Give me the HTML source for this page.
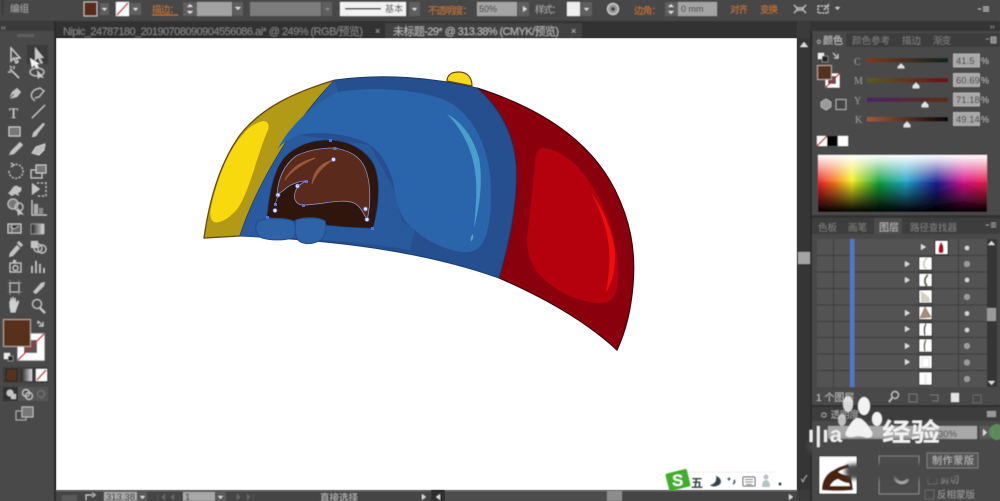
<!DOCTYPE html>
<html><head><meta charset="utf-8"><style>
html,body{margin:0;padding:0;background:#474747;width:1000px;height:501px;overflow:hidden}
svg{display:block}
text{font-family:"Liberation Sans","Noto Sans CJK SC",sans-serif}
.o{fill:#c4762c;font-size:9.5px}
.g{fill:#a8a8a8;font-size:9.5px}
.d{fill:#7d7d7d;font-size:9.5px}
.i{fill:none;stroke:#c4c4c4;stroke-width:1.2}
.f{fill:#c4c4c4}
.k{fill:#d0d0d0}
</style></head><body>
<svg width="1000" height="501" viewBox="0 0 1000 501" xmlns="http://www.w3.org/2000/svg">
<defs>
<filter id="b" x="-2%" y="-2%" width="104%" height="104%"><feGaussianBlur stdDeviation="0.45"/></filter>
<filter id="b2" x="-20%" y="-20%" width="140%" height="140%"><feGaussianBlur stdDeviation="2"/></filter>
<filter id="b3" x="-20%" y="-20%" width="140%" height="140%"><feGaussianBlur stdDeviation="0.3"/></filter>
<linearGradient id="hue" x1="0" x2="1" y1="0" y2="0">
<stop offset="0" stop-color="#ee1c25"/><stop offset=".1" stop-color="#f47a20"/><stop offset=".2" stop-color="#f5ee1e"/><stop offset=".36" stop-color="#12a33a"/><stop offset=".52" stop-color="#22a6cc"/><stop offset=".7" stop-color="#1c1c90"/><stop offset=".86" stop-color="#d8128c"/><stop offset="1" stop-color="#ee1c4a"/>
</linearGradient>
<linearGradient id="wh" x1="0" x2="0" y1="0" y2="1"><stop offset="0" stop-color="#fff"/><stop offset=".5" stop-color="#fff" stop-opacity="0"/></linearGradient>
<linearGradient id="bl" x1="0" x2="0" y1="0" y2="1"><stop offset=".45" stop-color="#000" stop-opacity="0"/><stop offset="1" stop-color="#000"/></linearGradient>
<linearGradient id="gr" x1="0" x2="1" y1="0" y2="0"><stop offset="0" stop-color="#222"/><stop offset="1" stop-color="#ddd"/></linearGradient>
</defs>

<!-- Canvas -->
<rect width="1000" height="501" fill="#474747"/>
<rect x="56" y="38" width="741" height="452" fill="#fff"/>

<g filter="url(#b3)">
<!-- yellow button -->
<path d="M447 80C448 74 452 72 459 72C467 72 472 77 472 86L447 81Z" fill="#f7d91a" stroke="#6b4a10" stroke-width="1.2"/>
<!-- yellow panel -->
<path d="M204 238C210 195 222 160 240 135C262 107 295 92 335 80C290 125 253 195 240 236Z" fill="#b39a18" stroke="#6b4a10" stroke-width="1.3"/>
<path d="M263 121C267 121 270 124 268 130C258 152 250 190 238 208C230 218 220 224 214 222C209 219 210 210 212 203C218 178 228 150 245 132C250 126 258 122 263 121Z" fill="#f7d90f"/>
<!-- red -->
<path d="M477 88C540 108 590 140 615 190C630 220 636 250 633 285C631 310 625 333 617 350C590 325 550 300 499 278C510 240 518 200 516 165C514 135 500 108 477 88Z" fill="#8a0611" stroke="#3f0508" stroke-width="1.2"/>
<path d="M543 148C565 150 585 170 600 200C612 225 619 250 618 280C617 298 610 304 598 303C580 302 555 292 540 275C530 265 527 252 527 240C529 215 533 190 535 162C536 152 538 148 543 148Z" fill="#b5060f"/>
<path d="M591 193C603 208 612 230 615 252C616 270 611 285 606 292C609 275 611 258 608 240C605 222 598 205 591 193Z" fill="#f0100f"/>
<!-- blue base -->
<path d="M335 80C385 73 435 78 477 88C500 108 514 135 516 165C518 200 510 240 499 278C420 250 330 240 240 236C253 195 290 125 335 80Z" fill="#25508f" stroke="#1b3b6e" stroke-width="1"/>
<path d="M240 236C253 195 290 125 335 80L338 92L300 135L370 145L395 192L402 222L415 229L410 250C350 240 300 238 240 236Z" fill="#2a5a9e"/>
<!-- blue lighter -->
<path d="M338 92C375 86 420 90 445 100C470 112 486 140 490 175C492 200 491 222 485 238C480 250 472 253 462 252C445 250 425 240 415 230C402 222 397 205 395 192C392 172 384 155 370 145C355 135 320 130 300 135C290 138 282 143 277 150C290 125 312 105 338 92Z" fill="#2b65ab"/>
<path d="M447 114C462 122 473 137 479 158C483 180 480 205 474 228C476 205 478 185 474 165C470 145 460 127 447 114Z" fill="#4a9ecb"/>
<path d="M473 234C474 237 472 241 471 241C470 239 471 236 473 234Z" fill="#5aa4cf"/>
<!-- window -->
<path d="M267 217C269 195 273 172 284 158C296 145 313 140 330 140C350 141 366 150 374 165C381 182 379 205 373 228C340 228 300 222 267 217Z" fill="#2d1410" stroke="#1b3b6e" stroke-width=".8"/>
<path d="M277 195C278 178 284 165 296 156C308 150 320 148 334 148C348 150 360 156 365 168C371 182 371 205 367 220C363 212 360 206 354 203C342 198 320 205 303 205C296 205 293 198 295 193C296 188 300 184 306 181C298 181 289 185 284 190Z" fill="#5a2c1b" stroke="#8890c0" stroke-width=".8"/>
<path d="M315 158C300 162 290 170 285 180C290 172 300 165 315 158Z" fill="#99583a" stroke="#99583a" stroke-width="1.2"/>
<path d="M333 160C320 163 313 172 312 184C316 174 322 167 333 160Z" fill="#99583a" stroke="#99583a" stroke-width=".8"/>
<!-- buttons -->
<path d="M257 222C265 217 285 218 293 221C297 227 297 234 293 238C280 241 266 240 260 237C255 233 255 227 257 222Z" fill="#2d63a8" stroke="#24508f" stroke-width="1.2"/>
<path d="M296 220C305 217 318 217 325 221C327 230 325 238 319 241C310 245 302 244 298 240C294 233 295 226 296 220Z" fill="#2d63a8" stroke="#24508f" stroke-width="1.2"/>
<!-- anchors -->
<g fill="#5a6fd0">
<rect x="329" y="139" width="3" height="3"/><rect x="333.500" y="147" width="3" height="3"/><rect x="266" y="216" width="3" height="3"/><rect x="371" y="227" width="3" height="3"/><rect x="305" y="180" width="3" height="3"/><rect x="302" y="204" width="3" height="3"/><rect x="274" y="203" width="3" height="3"/>
</g>
<g fill="#e4e6f6" stroke="#5a6fd0" stroke-width=".8">
<circle cx="333.500" cy="159.500" r="2"/><circle cx="297.500" cy="186" r="2"/><circle cx="278" cy="195" r="2"/><circle cx="275" cy="210.500" r="2"/><circle cx="365.500" cy="209" r="2"/><circle cx="367" cy="219.500" r="2"/>
</g>
<path d="M306 181L297 186M278 195L275 205" stroke="#7c8ad8" stroke-width=".6"/>
</g>

<g filter="url(#b)">
<!-- top bar -->
<rect width="1000" height="22" fill="#474747"/>
<rect y="21" width="1000" height="1" fill="#333"/>
<rect x="2" y="0" width="1" height="15" fill="#333"/>
<text x="10" y="12" class="g">编组</text>
<rect x="84" y="2" width="13" height="14" fill="#5a2c17" stroke="#bbb"/>
<rect x="100" y="3" width="9" height="12" fill="#5e5e5e"/><path d="M102 8h5l-2.500 3z" fill="#ddd"/>
<rect x="116" y="2" width="13" height="14" fill="#fff"/><path d="M117 15L128 3" stroke="#c8202a" stroke-width="1.500"/>
<rect x="130" y="3" width="11" height="12" fill="#5e5e5e"/><path d="M133 8h5l-2.500 3z" fill="#ddd"/>
<text x="152" y="13" class="o" textLength="27">描边：</text><rect x="152" y="14.500" width="26" height="1" fill="#c4762c"/>
<rect x="183" y="2" width="14" height="14" fill="#5e5e5e"/><path d="M187 7h6l-3-3zM187 11h6l-3 3z" fill="#ddd"/>
<rect x="197" y="2" width="35" height="14" fill="#a2a2a2"/>
<rect x="233" y="2" width="10" height="14" fill="#5e5e5e"/><path d="M235 7h6l-3 3z" fill="#ddd"/>
<rect x="250" y="2" width="71" height="14" fill="#7b7b7b"/>
<rect x="322" y="2" width="10" height="14" fill="#5e5e5e"/><path d="M325 8h5l-2.500 3z" fill="#888"/>
<rect x="340" y="2" width="66" height="14" fill="#f2f2f2"/><rect x="345" y="8" width="36" height="1.500" fill="#111"/>
<text x="385" y="12" font-size="9" fill="#444" textLength="18">基本</text>
<rect x="409" y="2" width="11" height="14" fill="#5e5e5e"/><path d="M412 8h5l-2.500 3z" fill="#ddd"/>
<text x="428" y="14" class="o" textLength="44">不透明度：</text>
<rect x="477" y="2" width="40" height="14" fill="#a4a4a4"/><text x="479" y="12" font-size="9" fill="#333">50%</text>
<rect x="518" y="2" width="11" height="14" fill="#5e5e5e"/><path d="M523 6v6l4-3z" fill="#ddd"/>
<text x="535" y="13" class="g" textLength="26">样式：</text>
<rect x="567" y="2" width="13" height="14" fill="#eee"/>
<rect x="581" y="2" width="11" height="14" fill="#5e5e5e"/><path d="M584 8h5l-2.500 3z" fill="#ddd"/>
<circle cx="613" cy="9" r="5.500" fill="#999" stroke="#ddd"/><circle cx="613" cy="9" r="2" fill="#444"/>
<text x="634" y="14" class="o" textLength="27">边角：</text>
<rect x="665" y="2" width="13" height="14" fill="#5e5e5e"/><path d="M668 7h6l-3-3zM668 11h6l-3 3z" fill="#ddd"/>
<rect x="678" y="2" width="39" height="14" fill="#a4a4a4"/><text x="681" y="12" font-size="9" fill="#333">0 mm</text>
<text x="730" y="13" class="o" textLength="18">对齐</text>
<text x="760" y="13" class="o" textLength="18">变换</text>
<path d="M794 5l3 3h6l3-3M794 13l3-3h6l3 3M797 8v2M803 8v2" class="i"/>
<rect x="818" y="6" width="10" height="7" class="i" stroke-dasharray="2 1"/><path d="M824 10l5-6" class="i"/>
<path d="M835 7h5l-2.500 3z" fill="#ccc"/>
<path d="M978 9h3M983 7h6M983 9h6M983 11h6" stroke="#bbb" stroke-width="1"/>

<!-- tab bar -->
<rect y="22" width="797" height="16" fill="#333"/>
<rect x="56" y="23" width="329" height="15" fill="#303030"/>
<text x="63" y="35" font-size="11" fill="#858585" textLength="300">Nipic_24787180_20190708090904556086.ai* @ 249% (RGB/预览)</text>
<text x="375" y="34" font-size="9" fill="#aaa">×</text>
<rect x="385" y="23" width="197" height="15" fill="#434343"/>
<text x="393" y="35" font-size="11" fill="#b8b8b8" textLength="166">未标题-29* @ 313.38% (CMYK/预览)</text>
<text x="571" y="34" font-size="9" fill="#bbb">×</text>
<rect x="582" y="23" width="215" height="15" fill="#333"/>

<!-- left toolbar -->
<rect y="22" width="54" height="479" fill="#484848"/>
<rect y="22" width="54" height="9" fill="#3b3b3b"/>
<text x="1" y="30" font-size="7" fill="#aaa">‹‹</text>
<rect x="17" y="34" width="17" height="3" fill="#5e5e5e"/>
<rect x="54" y="22" width="2" height="479" fill="#2a2a2a"/>
<rect x="27" y="45" width="21" height="19" fill="#3a3a3a"/>
<!-- selection -->
<path d="M11 48v13l3-3 2 5 2-1-2-4h4z" fill="none" stroke="#d5d5d5" stroke-width="1.200"/>
<path d="M35 47v14l3-3 3 6 2-1-3-5h4z" fill="#c8c8c8"/>
<path d="M30 58l2 10 2-3 3 4 2-1-2-4h3z" fill="#f4f4f4"/>
<path d="M10 69l9 9" stroke="#ccc" stroke-width="1.500"/><path d="M10 66l2 2M14 66v3M8 72h3" class="i"/>
<ellipse cx="37" cy="72" rx="7" ry="4" class="i"/><path d="M37 70l1 9 2-2 4 1z" fill="#ccc"/>
<!-- pen -->
<path d="M9 99l3-7 5-4 4 4-4 5z" class="f"/><path d="M9 99l5-5" stroke="#444"/>
<path d="M32 98c-2-4 1-8 5-9l3-1 4 3-5 6-4 1M32 98l3 3" class="i"/>
<text x="9" y="118" font-size="15" fill="#d2d2d2" style="font-family:'Liberation Serif',serif">T</text>
<path d="M32 118l13-13" stroke="#ccc" stroke-width="1.200"/>
<rect x="9" y="127" width="11" height="9" fill="#777" stroke="#ccc"/>
<path d="M32 137c3 0 5-1 6-4l7-9-2-1-8 8c-2 1-2 3-3 6z" class="f"/>
<path d="M9 155l2-4 9-9 3 3-9 9z" class="f"/>
<path d="M32 153l4-6 9-3-1 6-5 5z" fill="#bbb" stroke="#eee" stroke-width=".6"/>
<!-- rotate -->
<path d="M9 171a7 7 0 1 0 4-6" class="i" stroke-dasharray="2 1.500"/><path d="M11 163l3 2-3 2" class="i"/>
<rect x="31" y="170" width="11" height="8" class="i"/><rect x="36" y="165" width="10" height="8" fill="#777" stroke="#ccc"/>
<path d="M8 193c3-1 4-6 7-7s3 2 6 1c1 3 0 5-3 6l1 3-4-2-3 2z" class="f"/>
<path d="M32 183l8 6-8 6z" class="f"/><path d="M37 183h9v13h-9" class="i" stroke-dasharray="2 2"/>
<!-- shape builder -->
<circle cx="13" cy="204" r="5" fill="#777" stroke="#ccc"/><circle cx="19" cy="207" r="4" class="i"/><path d="M17 207l1 9 2-2 4 1z" class="f"/>
<path d="M32 200v15h15" class="i"/><rect x="34" y="204" width="4" height="10" fill="#aaa"/><rect x="39" y="208" width="4" height="6" fill="#888"/>
<rect x="8" y="224" width="13" height="9" fill="#666" stroke="#ccc"/><path d="M10 226l4 3 5-3M12 224v9" stroke="#ddd" stroke-width=".6"/>
<rect x="31" y="224" width="13" height="10" fill="url(#gr)" stroke="#bbb" stroke-width=".6"/>
<path d="M10 253l7-8 3 3-7 8-4 1zM17 243l2-2 4 4-2 2z" class="f"/>
<rect x="31" y="241" width="7" height="7" class="f"/><circle cx="38" cy="248" r="4" class="i"/><circle cx="42" cy="249" r="4" class="i"/>
<!-- graph -->
<rect x="10" y="263" width="11" height="9" class="i"/><circle cx="15.500" cy="268" r="2.500" class="i"/><rect x="13" y="260" width="3" height="3" class="f"/>
<path d="M32 273v-7M36 273v-12M40 273v-9M44 273v-5" stroke="#ccc" stroke-width="1.500"/>
<rect x="10" y="283" width="9" height="9" class="i"/><path d="M8 283h14M8 292h14M10 280v15M19 280v15" stroke="#aaa" stroke-width=".5"/>
<path d="M33 292l8-9 4-1-1 4-8 8z" class="f"/>
<path d="M10 306v-5l1 3v-6l2 5v-6l1 6 1-5 1 6 2-3c1 0 0 3-1 5l-2 6h-4z" fill="#d0d0d0" stroke="#d0d0d0"/>
<circle cx="37" cy="304" r="4.500" class="i" stroke-width="1.800"/><path d="M40 308l5 5" stroke="#ccc" stroke-width="2"/>
<!-- fill stroke -->
<rect x="17.500" y="333.500" width="27" height="27" fill="#fff" stroke="#aaa" stroke-width=".5"/>
<rect x="24" y="340" width="13" height="13" fill="#565656"/>
<path d="M18 360L44 334" stroke="#c01d2b" stroke-width="1.500"/>
<rect x="3.500" y="319.500" width="27" height="27" fill="#57301f" stroke="#b5a59a"/>
<path d="M38 321l5 5M43 322v4h-4M38 321v3" class="i" stroke-width="1"/>
<rect x="4" y="353" width="6" height="6" fill="#eee"/><rect x="8" y="356" width="5" height="5" fill="#222" stroke="#ccc" stroke-width=".5"/>
<rect x="3" y="367" width="45" height="16" fill="#3c3c3c"/>
<rect x="6" y="369" width="11" height="12" fill="#57301f" stroke="#222"/>
<rect x="21" y="369" width="11" height="12" fill="url(#gr)"/>
<rect x="36" y="369" width="11" height="12" fill="#fff"/><path d="M37 380L46 370" stroke="#c01d2b" stroke-width="1.500"/>
<rect x="3" y="387" width="15" height="14" fill="#333"/><rect x="18" y="387" width="30" height="14" fill="#555"/>
<circle cx="10" cy="393" r="3.500" class="f"/><rect x="11" y="394" width="5" height="5" class="f"/>
<circle cx="26" cy="393" r="3.500" class="i"/><circle cx="29" cy="396" r="3.500" class="i"/>
<circle cx="41" cy="394" r="3.500" fill="none" stroke="#777"/>
<rect x="16" y="411" width="10" height="9" fill="none" stroke="#aaa"/><rect x="22" y="407" width="11" height="10" fill="#777" stroke="#bbb"/>

<!-- gutter between canvas and panels -->
<rect x="797" y="22" width="15" height="479" fill="#3a3a3a"/>
<rect x="797" y="38" width="13" height="452" fill="#363636"/>
<path d="M800 47h8l-4-5z" fill="#ddd"/>
<rect x="798" y="252" width="12" height="12" fill="#a4a4a4"/>
<rect x="810" y="30" width="2" height="471" fill="#2b2b2b"/>

<!-- right panels -->
<rect x="812" y="22" width="188" height="479" fill="#494949"/>
<rect x="810" y="22" width="190" height="9" fill="#343434"/>
<text x="990" y="29" font-size="7" fill="#aaa">››</text>
<rect x="812" y="33" width="188" height="14" fill="#3e3e3e"/>
<rect x="813" y="33" width="33" height="14" fill="#494949"/>
<text x="816" y="44" font-size="7" fill="#ccc">≎</text>
<text x="823" y="44" font-size="10" fill="#c6c6c6" textLength="20">颜色</text>
<text x="852" y="44" class="d" textLength="38">颜色参考</text>
<text x="902" y="44" class="d" textLength="19">描边</text>
<text x="933" y="44" class="d" textLength="18">渐变</text>
<path d="M986 39h3M991 37h5v6h-5z" stroke="#aaa" fill="#888" stroke-width=".8"/>

<rect x="818" y="53" width="6" height="6" fill="#eee"/><rect x="822" y="56" width="6" height="6" fill="#222" stroke="#bbb" stroke-width=".5"/>
<path d="M833 53l4 4M838 54v4h-4" class="i" stroke-width=".9"/>
<rect x="825.500" y="73.500" width="14" height="14" fill="#fff"/><rect x="828" y="76" width="8" height="8" fill="#555"/><path d="M825 88L840 73" stroke="#c01d2b" stroke-width="1.400"/>
<rect x="817.500" y="65.500" width="14" height="14" fill="#57301f" stroke="#b5a59a"/>
<path d="M821 102l5-3 5 3v5l-5 3-5-3z" fill="#999" stroke="#ccc" stroke-width=".6"/>
<rect x="836" y="99.500" width="10" height="10" fill="#444" stroke="#aaa"/>

<g font-size="10" fill="#999">
<text x="854" y="65" style="font-family:'Liberation Serif',serif">C</text>
<text x="854" y="84" style="font-family:'Liberation Serif',serif">M</text>
<text x="854" y="104" style="font-family:'Liberation Serif',serif">Y</text>
<text x="855" y="123" style="font-family:'Liberation Serif',serif">K</text>
</g>
<defs>
<linearGradient id="sc" x1="0" x2="1"><stop offset="0" stop-color="#7a3a20"/><stop offset="1" stop-color="#10241e"/></linearGradient>
<linearGradient id="sm" x1="0" x2="1"><stop offset="0" stop-color="#5a5a1a"/><stop offset="1" stop-color="#6a1020"/></linearGradient>
<linearGradient id="sy" x1="0" x2="1"><stop offset="0" stop-color="#4a2468"/><stop offset="1" stop-color="#5a3010"/></linearGradient>
<linearGradient id="sk" x1="0" x2="1"><stop offset="0" stop-color="#a05a3a"/><stop offset="1" stop-color="#080404"/></linearGradient>
</defs>
<rect x="867" y="58" width="81" height="4.500" fill="url(#sc)"/>
<rect x="867" y="78" width="81" height="4.500" fill="url(#sm)"/>
<rect x="867" y="97.500" width="81" height="4.500" fill="url(#sy)"/>
<rect x="867" y="117" width="81" height="4.500" fill="url(#sk)"/>
<path d="M901 64l-3 3v1h6v-1z M916 83l-3 3v2h6v-2z M925 102l-3 3v2h6v-2z M907 122l-3 3v2h6v-2z" fill="#e4e4e4" stroke="#e4e4e4" stroke-width=".8"/>
<g fill="#a8a8a8" stroke="#ddd" stroke-width=".5">
<rect x="953.500" y="54" width="26" height="13"/><rect x="953.500" y="73.500" width="26" height="13"/><rect x="953.500" y="93" width="26" height="13"/><rect x="953.500" y="112.500" width="26" height="13"/>
</g>
<g font-size="9.500" fill="#3c3c3c">
<text x="956" y="64">41.5</text><text x="956" y="83.500">60.69</text><text x="956" y="103">71.18</text><text x="956" y="122.500">49.14</text>
</g>
<g font-size="9" fill="#b4b4b4"><text x="981" y="64">%</text><text x="981" y="83.500">%</text><text x="981" y="103">%</text><text x="981" y="122.500">%</text></g>

<rect x="817" y="136" width="10" height="10" fill="#fff"/><path d="M817 146L827 136" stroke="#c01d2b" stroke-width="1.300"/>
<rect x="827" y="136" width="10" height="10" fill="#000"/><rect x="838" y="136" width="10" height="10" fill="#fff"/>
<rect x="818" y="155" width="169" height="57" fill="url(#hue)"/>
<rect x="818" y="155" width="169" height="57" fill="url(#wh)"/>
<rect x="818" y="155" width="169" height="57" fill="url(#bl)"/>

<!-- layers -->
<rect x="812" y="215" width="188" height="3" fill="#333"/>
<rect x="812" y="218" width="188" height="16" fill="#3e3e3e"/>
<rect x="874" y="218" width="28" height="16" fill="#4e4e4e"/>
<text x="818" y="231" class="d" textLength="19">色板</text>
<text x="848" y="231" class="d" textLength="19">画笔</text>
<text x="879" y="231" font-size="10" fill="#bcbcbc" textLength="20">图层</text>
<text x="910" y="231" class="d" textLength="47">路径查找器</text>
<path d="M986 225h3M991 223h5M991 225h5M991 227h5" stroke="#bbb" stroke-width=".8"/>
<rect x="817" y="239" width="170" height="148" fill="#535353"/>
<g fill="#3a3a3a">
<rect x="817" y="255" width="170" height="1"/><rect x="817" y="271.500" width="170" height="1"/><rect x="817" y="288" width="170" height="1"/><rect x="817" y="304.500" width="170" height="1"/><rect x="817" y="321" width="170" height="1"/><rect x="817" y="337" width="170" height="1"/><rect x="817" y="353.500" width="170" height="1"/><rect x="817" y="370" width="170" height="1"/>
<rect x="833" y="239" width="1" height="148"/><rect x="850" y="239" width="1" height="148"/><rect x="958" y="239" width="1" height="148"/>
</g>
<rect x="850" y="239" width="4.500" height="148" fill="#5277c8"/>
<rect x="987" y="239" width="10" height="148" fill="#353535"/>
<rect x="987" y="308" width="9" height="13" fill="#9a9a9a"/>
<path d="M988 245h7l-3.500-4zM988 381h7l-3.500 4z" fill="#ddd"/>
<g fill="#ddd">
<path d="M921 244v6l5-3z"/><path d="M905 261v6l5-3z"/><path d="M905 277v6l5-3z"/><path d="M905 310v6l5-3z"/><path d="M905 326v6l5-3z"/><path d="M905 343v6l5-3z"/><path d="M905 359v6l5-3z"/>
</g>
<rect x="935" y="240.500" width="13" height="14" fill="#fff" stroke="#111"/><path d="M941 242c3 3 3 8 2 11h-4c-1-4 0-8 2-11z" fill="#a80a14"/>
<g fill="#fff" stroke="#111" stroke-width=".8">
<rect x="919" y="257" width="13" height="13"/><rect x="919" y="273.500" width="13" height="13"/><rect x="919" y="290" width="13" height="13"/><rect x="919" y="306.500" width="13" height="13"/><rect x="919" y="323" width="13" height="13"/><rect x="919" y="339" width="13" height="13"/><rect x="919" y="355.500" width="13" height="13"/><rect x="919" y="372" width="13" height="13"/>
</g>
<path d="M927 258c-4 3-4 8-1 11" stroke="#c9c4b8" stroke-width="1.500" fill="none"/>
<path d="M928 275c-4 3-4 8-1 11" stroke="#5a5a38" stroke-width="2" fill="none"/>
<path d="M921 291l8 6 1 5h-9z" fill="#d5cfc4"/>
<path d="M925 307l6 10-11 1z" fill="#ad8b72" stroke="#5a3a2a" stroke-width=".5"/>
<path d="M926 324c-2 3-2 8-1 11" stroke="#3a3a2a" stroke-width="1.500" fill="none"/>
<path d="M926 340c-2 3-2 8-1 11" stroke="#5a5a38" stroke-width="1.500" fill="none"/>
<rect x="922" y="358" width="7" height="9" fill="none" stroke="#ccc" stroke-width=".6"/>
<rect x="924" y="374" width="3" height="10" fill="#eee"/>
<g fill="#9a9a9a" stroke="#333" stroke-width=".5">
<circle cx="967" cy="248" r="3.500" fill="#777"/><circle cx="967" cy="264" r="3.500"/><circle cx="967" cy="280" r="3.500" fill="#777"/><circle cx="967" cy="297" r="3.500"/><circle cx="967" cy="313.500" r="3.500" fill="#777"/><circle cx="967" cy="330" r="3.500" fill="#777"/><circle cx="967" cy="346" r="3.500"/><circle cx="967" cy="362.500" r="3.500"/><circle cx="967" cy="379" r="3.500"/>
</g>
<g fill="#ccc" stroke="#eee" stroke-width=".7"><circle cx="967" cy="248" r="1.500"/><circle cx="967" cy="280" r="1.500"/><circle cx="967" cy="313.500" r="1.500"/><circle cx="967" cy="330" r="1.500"/></g>
<text x="816" y="401" font-size="10" fill="#bdbdbd">1 个图层</text>
<circle cx="895" cy="395" r="3.500" class="i"/><path d="M892 398l-3 4" stroke="#ccc" stroke-width="1.500"/>
<rect x="909" y="394" width="8" height="8" fill="none" stroke="#777"/>
<path d="M930 395h8v6h-6" fill="none" stroke="#777"/>
<rect x="951" y="393" width="8" height="9" fill="#e4e4e4"/>
<rect x="973" y="395" width="8" height="8" fill="none" stroke="#666"/>

<!-- transparency -->
<rect x="812" y="405" width="188" height="2" fill="#2f2f2f"/>
<rect x="812" y="407" width="188" height="14" fill="#3c3c3c"/>
<text x="820" y="418" font-size="9.500" fill="#aaa">≎ 透明度</text>
<rect x="987" y="411" width="9" height="6" fill="#999"/>
<rect x="828" y="426" width="149" height="13" fill="#a8a8a8"/>
<text x="938" y="437" font-size="9.500" fill="#444">30%</text>
<rect x="980" y="426" width="10" height="13" fill="#5c5c5c"/><path d="M983 429v7l4-3.500z" fill="#ddd"/>
<circle cx="997" cy="432" r="8" fill="#5c8a5c"/>
<rect x="819" y="456" width="38" height="38" fill="#fff" stroke="#222"/>
<path d="M822 490c0-8 3-16 12-20 4-3 9-4 14-6l2 4c-5 0-9 2-12 4 5 3 9 4 13 3l2 15c-10 1-21 1-31 0z" fill="#4a2010"/>
<path d="M830 486c2-4 5-6 8-7 5 3 8 4 11 4l1 3z" fill="#fff"/>
<rect x="879" y="456" width="40" height="38" fill="#4c4c4c" stroke="#888"/>
<path d="M906 470a7 7 0 1 0 2 9" fill="none" stroke="#aaa" stroke-width="3"/>
<text x="925" y="450" font-size="1" fill="#494949"> </text>
<rect x="928" y="475" width="9" height="9" fill="none" stroke="#666"/>
<text x="940" y="483" font-size="9.500" fill="#999">剪切</text>
<rect x="925" y="490" width="9" height="9" fill="none" stroke="#666"/>
<text x="937" y="498" font-size="9.500" fill="#999">反相蒙版</text>
<text x="801" y="482" font-size="9" fill="#ccc">✓</text>

<!-- watermark -->
<g filter="url(#b2)" fill="#4a4a4a"><rect x="808" y="440" width="145" height="14" rx="7"/><rect x="845" y="464" width="113" height="15" rx="7"/></g>
<rect x="927" y="453" width="51" height="15" fill="#555" stroke="#999" stroke-width=".6"/>
<text x="932" y="464" font-size="10" fill="#bbb" textLength="42">制作蒙版</text>
<g fill="#f2f2f2">
<ellipse cx="848" cy="404" rx="5" ry="8" opacity=".85"/>
<ellipse cx="864" cy="406" rx="6" ry="9"/>
<ellipse cx="877" cy="419" rx="5" ry="7"/>
<ellipse cx="842" cy="420" rx="4" ry="6" opacity=".7"/>
<path d="M858 418c5 0 11 8 14 14 2 5-3 7-8 5-4-1-7-1-11 0-5 1-9-1-7-5 3-6 7-14 12-14z"/>
</g>
<text x="882" y="441" font-size="25" font-weight="bold" fill="#f2f2f2" textLength="58" lengthAdjust="spacingAndGlyphs">经验</text>
<text x="808" y="442" font-size="22" font-weight="bold" fill="#eee" textLength="34">ı|ıa</text>

<!-- status bar -->
<rect x="56" y="490" width="741" height="11" fill="#444"/>
<rect x="56" y="490" width="741" height="1" fill="#8a8a8a"/>
<rect x="62" y="495" width="15" height="6" fill="#5a5a5a"/>
<path d="M86 500v-5h6M92 493l3 2-3 2" class="i" stroke-width="1"/>
<rect x="104" y="492" width="33" height="9" fill="#a8a8a8"/>
<text x="106" y="500" font-size="9.500" fill="#333">313.38</text>
<rect x="138" y="492" width="9" height="9" fill="#5c5c5c"/><path d="M140 496h5l-2.500 3z" fill="#ddd"/>
<path d="M158 494v6M162 497l3-3v6zM171 497l3-3v6z" fill="#6a6a6a" stroke="#6a6a6a" stroke-width=".5"/>
<rect x="183" y="492" width="32" height="9" fill="#a8a8a8"/><text x="185" y="500" font-size="9.500" fill="#333">1</text>
<rect x="216" y="492" width="10" height="9" fill="#5c5c5c"/><path d="M218 496h5l-2.500 3z" fill="#ddd"/>
<path d="M237 494l3 3-3 3zM247 494l3 3-3 3zM253 494v6" fill="#6a6a6a" stroke="#6a6a6a" stroke-width=".5"/>
<text x="320" y="501" font-size="9.500" fill="#bbb" textLength="38">直接选择</text>
<path d="M422 494v6l4-3z" fill="#ddd"/>
<rect x="431" y="490" width="14" height="11" fill="#2e2e2e"/><path d="M440 494v6l-4-3z" fill="#ddd"/>
<rect x="445" y="491" width="162" height="10" fill="#4e4e4e"/>
<rect x="607" y="491" width="15" height="10" fill="#8d8d8d"/>
<path d="M789 494v6l4-3z" fill="#ddd"/>

<!-- IME -->
<rect x="667" y="471" width="22" height="18" rx="2" fill="#3fae2a" transform="rotate(-14 678 480)"/>
<text x="672" y="486" font-size="17" font-weight="bold" fill="#fff">S</text>
<path d="M689 472h86" stroke="#ddd" stroke-width=".6"/>
<text x="691" y="487" font-size="12" font-weight="bold" fill="#33424a">五</text>
<path d="M716 476c1 5-1 8-6 9 3 3 10 1 11-3 0-3-2-5-5-6z" fill="#33424a"/>
<circle cx="729" cy="479" r="1.500" fill="#5a6a70"/><path d="M734 480c1 1 1 3-1 4" stroke="#33424a" stroke-width="1.500" fill="none"/>
<rect x="743" y="477" width="12" height="9" rx="1" fill="#fff" stroke="#445" stroke-width="1"/>
<path d="M745 479.500h8M745 482h8M746 484.500h6" stroke="#556" stroke-width=".9"/>
<circle cx="766" cy="477" r="2.500" fill="#b5c3c5"/><path d="M762 487c0-5 2-7 4-7s4 2 4 7z" fill="#b5c3c5"/>
<circle cx="780" cy="484" r="1.500" fill="#33424a"/>
</g>
</svg>
</body></html>
